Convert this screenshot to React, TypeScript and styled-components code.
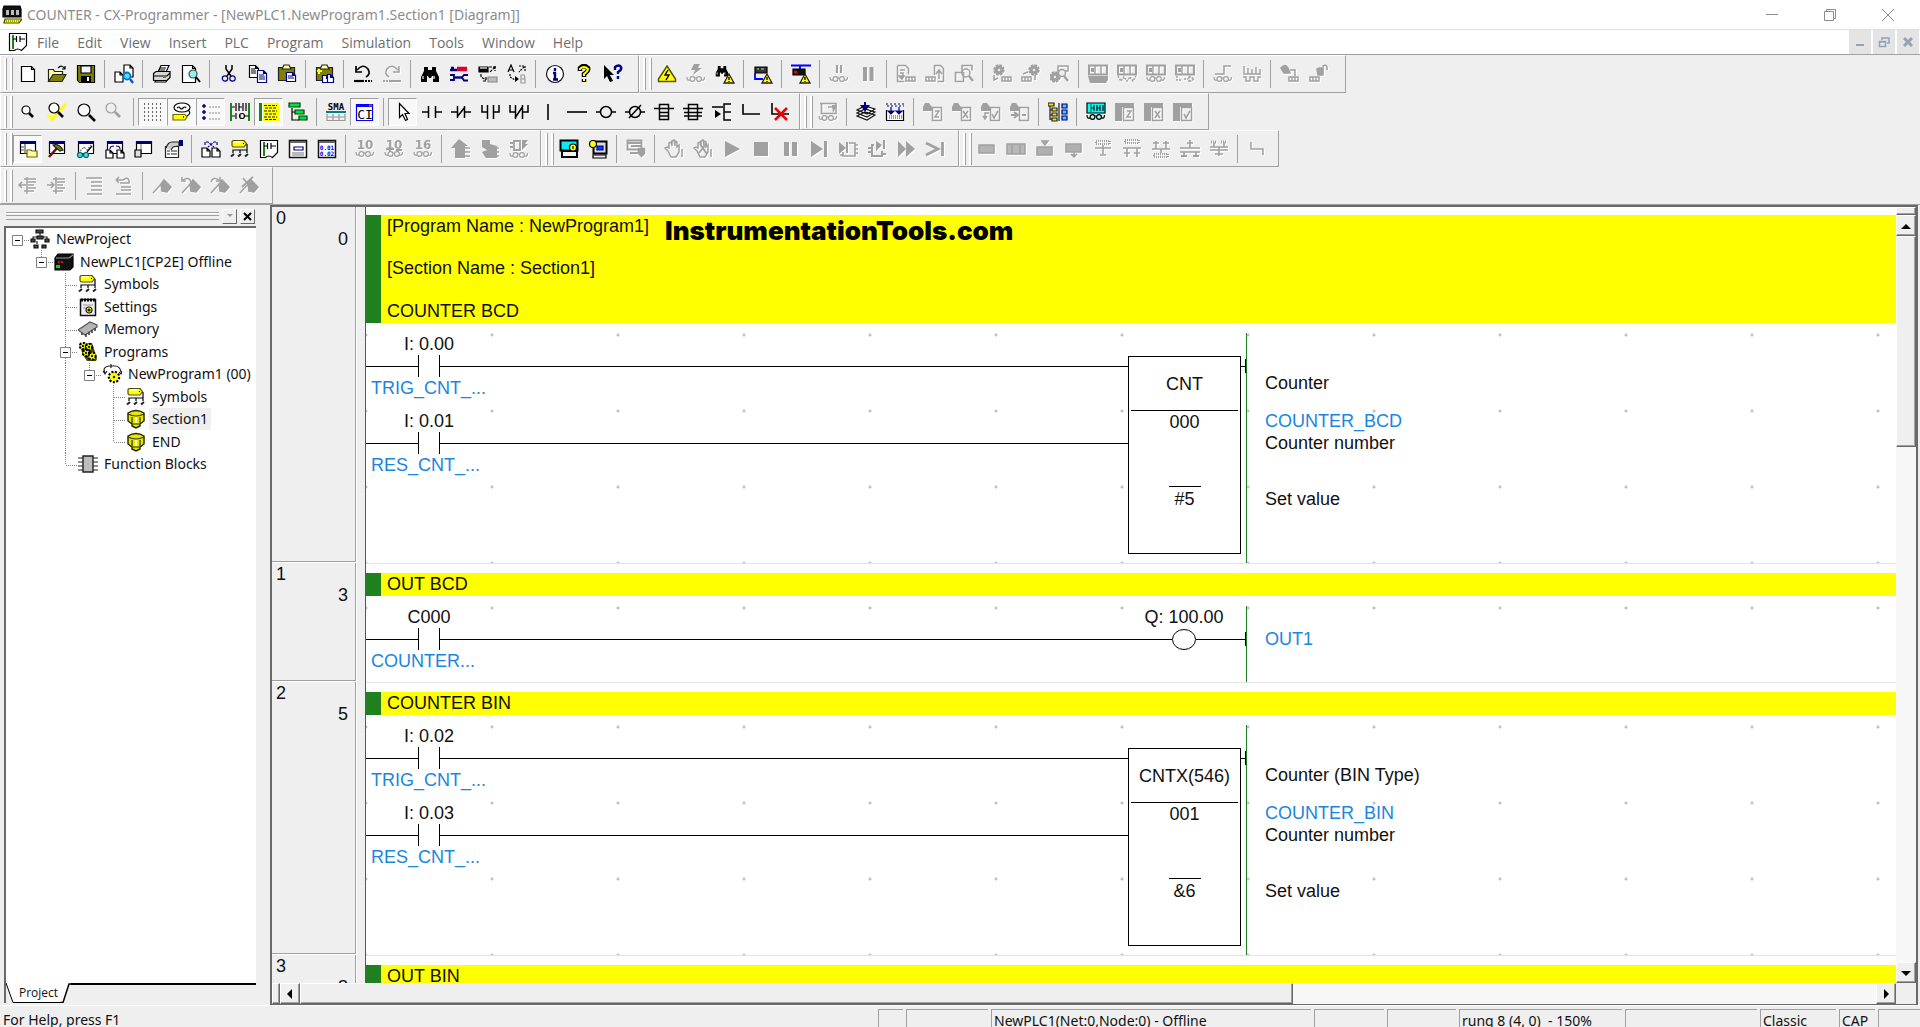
import React from "react";
import styled, { createGlobalStyle, css } from "styled-components";

const UI = '"Noto Sans", "Open Sans", sans-serif';
const MENU = '"Open Sans", "Noto Sans", sans-serif';
const ARIAL = '"Liberation Sans", Arial, sans-serif';
const FACE = "#efefef";
const SHADE = "#a0a0a0";
const DARK = "#696969";
const NAVY = "#000080";
const YEL = "#ffff00";
const BLUE = "#1a86e0";
const GREEN = "#208020";

const Global = createGlobalStyle`
  *, *::before, *::after { box-sizing: border-box; }
  body { margin: 0; background: ${FACE}; font-family: ${UI}; color: #111; overflow: hidden; }
  button { font: inherit; color: inherit; border: 0; padding: 0; margin: 0; background: none; display: flex; align-items: center; justify-content: center; }
  ul { list-style: none; margin: 0; padding: 0; }
  svg { display: block; flex: none; }
`;

/* ---------- icon parts ---------- */

const Specs = ({ y = 15, fill = "none" }: { y?: number; fill?: string }) => (
  <g strokeWidth="1.200">
    <circle cx="6.500" cy={y} r="2.400" fill={fill} />
    <circle cx="13" cy={y} r="2.400" fill={fill} />
    <path d={`M4 ${y + 1}Q1 ${y + 2} 1 ${y - 2}M15.500 ${y + 1}Q18.500 ${y + 2} 18.500 ${y - 2}M8.500 ${y - 1}h2`} />
  </g>
);
const Warn = ({ x = 9, y = 9 }: { x?: number; y?: number }) => (
  <g transform={`translate(${x} ${y})`}>
    <path d="M5 1 10 10H0Z" fill={YEL} stroke="#222" strokeWidth="1.300" />
    <path d="M5 4v3M5 8v1" stroke="#000" strokeWidth="1.300" />
  </g>
);
const Page = ({ x = 0, y = 0, w = 9, h = 11, s = "#000", f = "#fff" }: any) => (
  <path d={`M${x} ${y}h${w - 3}l3 3v${h - 3}h-${w}Z M${x + w - 3} ${y}v3h3`} fill={f} stroke={s} />
);
const Win = ({ children }: { children?: React.ReactNode }) => (
  <g>
    <path d="M2.500 2.500h15v12h-15z" fill="#fff" stroke="#000" />
    <path d="M2 2h16v3H2z" fill={NAVY} stroke="none" />
    {children}
  </g>
);
const Gear = ({ x, y, r = 4, fill = YEL, s = "#000" }: any) => (
  <g>
    <circle cx={x} cy={y} r={r} fill={fill} stroke={s} strokeWidth="2.500" strokeDasharray="2 1.400" />
    <circle cx={x} cy={y} r={r - 1} fill={fill} stroke="none" />
    <circle cx={x} cy={y} r="1.200" fill="#222" stroke="none" />
  </g>
);
const Cog = ({ x, y }: { x: number; y: number }) => (
  <g>
    <circle cx={x} cy={y} r="4.500" fill="currentColor" stroke="currentColor" strokeWidth="2.500" strokeDasharray="2.500 1" />
    <circle cx={x} cy={y} r="1.200" fill={FACE} stroke="none" />
  </g>
);
const Box = ({ x = 1, y = 13 }: { x?: number; y?: number }) => (
  <path d={`M${x} ${y}h9v4h-9zM${x + 3} ${y}v4M${x + 6} ${y}v4`} />
);
const Rack = () => (
  <g>
    <path d="M1 1.500h18v9H1z" strokeWidth="2.200" />
    <path d="M7 2v8M13 2v8" strokeWidth="1.500" />
    <path d="M3 4h3v4H3z" fill="currentColor" stroke="none" />
  </g>
);
const Chip = ({ mark }: { mark: React.ReactNode }) => (
  <g>
    <path d="M0 9V5l2-4h4l3 4v4z" fill="currentColor" stroke="none" />
    <path d="M9.500 5.500h9v13h-9z" />
    {mark}
  </g>
);
const Panel = ({ mark }: { mark: React.ReactNode }) => (
  <g>
    <path d="M0 1h19v4H7v14H0z" fill="currentColor" stroke="none" />
    <path d="M8.500 5.500h10v13h-10z" />
    {mark}
  </g>
);
const MarkList = <path d="M12 9h4l-4 6h4" />;
const MarkX = <path d="m11 9 5 7m0-7-5 7" strokeWidth="1.600" />;
const MarkV = <path d="m11 12 2 4 4-7" strokeWidth="1.600" />;
const Binoc = () => (
  <g>
    <path d="M4 3h4v3h4V3h4v4l3 6v5h-6v-6h-1l-1 2H9l-1-2H7v6H1v-5l3-6z" fill="#000" stroke="none" />
    <path d="M3 12v3M14 12v3" stroke="#fff" />
  </g>
);
const Plain10 = ({ n }: { n: string }) => (
  <text x="10" y="10" textAnchor="middle" fontFamily="DejaVu Sans" fontWeight="700" fontSize="12" fill="currentColor" stroke="none">
    {n}
  </text>
);
const Flag = () => <path d="M1 17 11 6M9 8l3-4 7 7-4 5-5-1z" fill="currentColor" />;
const Flash = () => <path d="M8 0h6l-2 4h4l-9 7 2-5H5z" fill="currentColor" stroke="none" />;
const Comb = ({ y }: { y: number }) => <path d={`M3 ${y}h14v3H3z`} strokeDasharray="1 1" strokeWidth="2" />;
const Hand = () => (
  <path d="M4 12 1 9l2-1 2 1V4l2-1 1 4V2l2-1 1 6V2l2 1v5l2-2v7l-3 5H7z M18 10v8" fill="none" strokeWidth="1.500" />
);
const DipChip = () => (
  <path d="M11 4h6v13H5v-4M17 6h3M17 10h3M17 14h3M2 16h3" strokeWidth="1.600" />
);
const Magnify = ({ x = 8, y = 8, r = 5, s = "#000", f = "#fff" }: any) => (
  <g stroke={s}>
    <path d={`M${x + r - 1} ${y + r - 1}l${r} ${r}`} strokeWidth="2.600" />
    <circle cx={x} cy={y} r={r} fill={f} />
  </g>
);
const Comment = () => (
  <g>
    <ellipse cx="10" cy="5.500" rx="8" ry="4.500" fill="#fff" />
    <path d="M5 6q2-2 3 0t3 0 3 0M16 8q4 3-1 6" />
    <path d="M1 12.500h12l2 2.500-2 3H1z" fill={YEL} stroke="#6b6b00" />
    <path d="M11 15h1" stroke="#000" strokeWidth="1.500" />
  </g>
);
const TagIcon = () => (
  <g>
    <path d="M3 1.500h11l2.500 3L14 8H3L2 6.500v-4z" fill={YEL} stroke="#555500" />
    <path d="M4 3h7" stroke="#fff" />
    <path d="M13 4.500h1M17 5v6H3v3M10 11v3M17 11v3" stroke="#000" />
    <path d="M1 17.500 4 15M8 17.500l3-2.500M15 17.500l3-2.500" stroke="#222" strokeWidth="2" />
  </g>
);
const LadderDoc = () => (
  <g>
    <path d="M1.500 1.500h17v12l-5 5q-4-3-7 0h-5z" fill="#fff" stroke="#000" />
    <path d="M5 3v14" stroke={GREEN} strokeWidth="2" />
    <path d="M5 7h3M8.500 4v6M12 4v6M12 7h5" stroke="#000" />
  </g>
);
const Clip = () => (
  <g>
    <path d="M1.500 3.500h16v13h-16z" fill="#808000" stroke="#222" />
    <path d="M5 5l2-4h5l2 4z" fill="#ffff9c" stroke="#222" />
  </g>
);

const icons: Record<string, React.ReactNode> = {
  new: <Page x={3.5} y={2.5} w={13} h={15} />,
  open: (
    <g>
      <path d="M1.500 17V5.500h5l1 2h8v3" fill="#ffff9c" stroke="#222" />
      <path d="M1.500 17.500 6 10.500h13l-4 7z" fill="#808000" stroke="#222" />
      <path d="M11 4q4-4 7 1m0-3v3h-3" stroke="#000" />
    </g>
  ),
  save: (
    <g>
      <path d="M1.500 1.500h17v17h-15l-2-2z" fill="#808000" stroke="#000" />
      <path d="M5 2h10v7H5z" fill="#f4f4f4" stroke="#000" />
      <path d="M5 12h10v6H5z" fill="#000" stroke="none" />
      <path d="M11 13h2v4h-2z" fill="#fff" stroke="none" />
    </g>
  ),
  compare: (
    <g>
      <Page x={1} y={8} w={8} h={10} />
      <Page x={10} y={1} w={9} h={12} />
      <circle cx="13" cy="12" r="3.500" fill="#3fe8ff" stroke="#0a6fd8" strokeWidth="1.800" />
      <path d="m16 15 3 4" stroke="#0a50d0" strokeWidth="2.400" />
    </g>
  ),
  print: (
    <g>
      <path d="m6 8 3-6.500h8L14 8z" fill="#fff" stroke="#000" />
      <path d="M1.500 9.500 4 7.500h14v6l-3 3H1.500z" fill="#d8d8d8" stroke="#000" />
      <path d="M2 12h13l3-3M4 16l-1 2h11l1-2M8 4h6M7 6h6" stroke="#000" />
      <path d="M11 13h3" stroke="#808000" strokeWidth="2" />
    </g>
  ),
  preview: (
    <g>
      <Page x={1.5} y={1.5} w={13} h={17} />
      <circle cx="12" cy="10" r="4" fill="#8ff2f2" stroke="#444" />
      <path d="m15 13 4 5" stroke="#000" strokeWidth="2" />
    </g>
  ),
  cut: (
    <g>
      <path d="M7 1v4l5 7M13 1v4l-5 7" stroke="#000" strokeWidth="1.500" />
      <circle cx="6" cy="14.500" r="2.700" stroke={NAVY} />
      <circle cx="13.500" cy="14.500" r="2.700" stroke={NAVY} />
    </g>
  ),
  copy: (
    <g>
      <Page x={1.5} y={1.5} w={9} h={12} />
      <path d="M3 5h4M3 7h5M3 9h5" stroke="#000" />
      <Page x={9.5} y={6.5} w={9} h={12} s={NAVY} />
      <path d="M11 11h5M11 13h6M11 15h6" stroke={NAVY} />
    </g>
  ),
  paste: (
    <g>
      <Clip />
      <Page x={9.5} y={8.5} w={9} h={9} s={NAVY} />
      <path d="M11 12h5M11 14h6" stroke={NAVY} />
    </g>
  ),
  pasteSpecial: (
    <g>
      <Clip />
      <path d="M2 7h5M4 5v5" stroke={YEL} strokeWidth="2" />
      <Page x={7.5} y={11.5} w={7} h={7} s={NAVY} />
      <Page x={12.5} y={10.5} w={6} h={8} s={NAVY} />
    </g>
  ),
  undo: (
    <g>
      <path d="M4 6q6-7 11-1 3 5-2 8M3 2v6h6" strokeWidth="1.700" />
      <path d="M1 17h10" strokeWidth="2.200" />
      <path d="M12 17h7" strokeDasharray="2 1" strokeWidth="2.200" />
    </g>
  ),
  redo: (
    <g>
      <path d="M16 6Q10-1 5 5q-3 5 2 8M17 2v6h-6" strokeWidth="1.500" />
      <path d="M1 17h8" strokeDasharray="2 1" strokeWidth="2" />
      <path d="M9 17h10" strokeWidth="2" />
    </g>
  ),
  find: <Binoc />,
  tools: (
    <g>
      <path d="M1 6h7M2 4h3" stroke={NAVY} strokeWidth="2.400" />
      <path d="M8 5h10" stroke="#e00030" strokeWidth="4.500" />
      <path d="M4 13.500h10" stroke={NAVY} strokeWidth="2.400" />
      <path d="M1 11h4v5H1M19 11h-4l-2 2.500 2 3h4" stroke={NAVY} strokeWidth="1.800" />
    </g>
  ),
  swap: (
    <g>
      <path d="M1 3h9v5H1z" fill="#000" stroke="#000" />
      <path d="M2 4h7" stroke="#fff" />
      <path d="M11 3h7M17 2v5M17 3l-5 5M3 10v3l5 3M8 13v4H4" strokeDasharray="3 1" stroke="#000" />
      <path d="M10 13h9v5h-9z" fill="#bbb" stroke="#888" />
    </g>
  ),
  ab: (
    <g>
      <path d="M1 8 4 1l3 7M2 6h4" stroke="#000" />
      <path d="M12 2h6v5M17 3l-5 5M3 10v3l5 3" strokeDasharray="2 1" stroke="#000" />
      <path d="M8 12l4 3-4 3z" fill="#000" stroke="none" />
      <path d="M14 11h3l1 2-1 2h-3zM14 15h4v4h-4z" stroke="#999" />
    </g>
  ),
  info: (
    <g>
      <circle cx="10" cy="10" r="8.500" fill="#fff" stroke="#111" />
      <path d="M10 4v3M8 9h2v6M8 15.500h5" stroke={NAVY} strokeWidth="2.400" />
    </g>
  ),
  help: (
    <g>
      <path d="M6 7V4q4-4 8 0 1 3-4 6v3M10 15v3" stroke="#000" strokeWidth="4.500" />
      <path d="M6 6V5q4-4 8 0 0 2-4 5v2M10 15v2" stroke={YEL} strokeWidth="2" />
    </g>
  ),
  whats: (
    <g>
      <path d="M1 1v14l3-3 3 6 3-1-3-6h4z" fill="#000" stroke="none" />
      <path d="M12 6V3q4-3 6 0 1 3-3 5v2M15 12v3" stroke={NAVY} strokeWidth="2.400" />
    </g>
  ),
  warn: (
    <g>
      <path d="M10 2 18.500 15v2.500h-17V15z" fill={YEL} stroke="#555500" strokeWidth="1.500" />
      <path d="m11 6-3 5h4l-3 5" stroke="#000" strokeWidth="1.400" />
    </g>
  ),
  flashSpecs: (
    <g>
      <Flash />
      <Specs />
    </g>
  ),
  findWarn: (
    <g>
      <g transform="scale(.7)">
        <Binoc />
      </g>
      <Warn />
    </g>
  ),
  plcWarn: (
    <g>
      <path d="M2 3h12v6H2z" fill="#333" stroke="#000" />
      <path d="M4 5h2M8 5h3" stroke="#ccc" />
      <path d="M2 9v6h8" stroke="#0000ff" strokeWidth="1.800" />
      <Warn />
    </g>
  ),
  netWarn: (
    <g>
      <path d="M0 1.500h20M9 1v4" stroke="#0000ff" strokeWidth="1.800" />
      <path d="M2 5h12v6H2z" fill="#111" stroke="#000" />
      <path d="M3 8h3" stroke="#f00" strokeWidth="2" />
      <Warn />
    </g>
  ),
  pauseSpecs: (
    <g>
      <path d="M8 1v8M12 1v8" strokeWidth="2" />
      <Specs />
    </g>
  ),
  pause: <path d="M7 3v14M13.500 3v14" strokeWidth="4" />,
  docDown: (
    <g>
      <path d="M1.500 1.500h8l3 3v6M1.500 1.500v16h7M4 6h5M4 9h3v4" />
      <path d="M3 12h5l-2 3z" fill="currentColor" />
      <Box x={10} y={13} />
    </g>
  ),
  docUp: (
    <g>
      <path d="M9.500 11V1.500h6l3 3v13h-6M14 15V7m-3 3 3-4 3 4" />
      <Box x={1} y={13} />
    </g>
  ),
  docFind: (
    <g>
      <path d="M1.500 8.500h8v9h-8zM8 8V1.500h10v5" strokeWidth="1.600" />
      <circle cx="12" cy="9" r="4" />
      <path d="m15 12 4 5" strokeWidth="2.400" />
    </g>
  ),
  gearDown: (
    <g>
      <Cog x={7} y={6} />
      <path d="M2 11v5l4-2" />
      <Box x={10} y={13} />
    </g>
  ),
  gearUp: (
    <g>
      <Cog x={13} y={6} />
      <path d="M14 11v5M2 10l5-2" />
      <Box x={1} y={13} />
    </g>
  ),
  gearFind: (
    <g>
      <Cog x={5} y={13} />
      <path d="M8 2h10v5H8z" />
      <circle cx="12" cy="9" r="3.500" fill={FACE} />
      <path d="m14 12 4 5" strokeWidth="2.400" />
    </g>
  ),
  rack1: (
    <g>
      <Rack />
      <path d="M0 12h20v4l-2 3H2z" fill="currentColor" stroke="none" />
    </g>
  ),
  rack2: (
    <g>
      <Rack />
      <path d="m1 12 3 5 3-4 3 4 3-4 3 4 3-5" strokeDasharray="2 1" />
    </g>
  ),
  rack3: (
    <g>
      <Rack />
      <Specs y={15} />
    </g>
  ),
  rack4: (
    <g>
      <Rack />
      <path d="M2 12v4h4M9 15h4M14 12l5 3-5 3z" strokeDasharray="2 1" />
    </g>
  ),
  pulse: (
    <g>
      <path d="M2 10h9V2h7" />
      <Specs y={15} />
    </g>
  ),
  trace: <path d="M2 2v8h17M6 4v6M10 5v5M14 3v7M18 5v5M1 13h3v4h4v-4h4v4h4v-4h3" strokeWidth="1.400" />,
  lock: (
    <g>
      <path d="M1 4q4-5 7 0l2 5H4z" fill="currentColor" />
      <path d="M10 6h5v6" />
      <Box x={9} y={13} />
    </g>
  ),
  unlock: (
    <g>
      <path d="M8 5q3-2 6 0v6H9z" fill="currentColor" />
      <path d="M14 6V2q3-2 4 1v3" />
      <Box x={1} y={13} />
    </g>
  ),
  zoomS: <Magnify x={8} y={8} r={4} />,
  zoomFit: (
    <g>
      <path d="M1 13l4 4L19 2" stroke={YEL} strokeWidth="3" />
      <Magnify x={7} y={6} r={5} />
    </g>
  ),
  zoomL: <Magnify x={8} y={8} r={6} f="#f7f7f7" />,
  zoomG: <Magnify x={6} y={6} r={5} s="#a0a0a0" f={FACE} />,
  grid: (
    <g strokeDasharray="1 3" strokeWidth="1.300" stroke="#333">
      <path d="M1 2h18M1 6h18M1 10h18M1 14h18M1 18h18" />
    </g>
  ),
  comment: <Comment />,
  list: (
    <g>
      <path d="M1 4h4M3 2v4M1 10h4M3 8v4M1 16h4M3 14v4" stroke={NAVY} strokeWidth="1.500" />
      <path d="M8 5h11M8 11h11M8 17h11" stroke="#888" strokeDasharray="2 1" />
    </g>
  ),
  ladder: (
    <g>
      <path d="M1 1v18M19 1v18" stroke={GREEN} strokeWidth="2" />
      <path d="M2 5h3M6 1v8M9 1v8M9 5h3M13 1v8M16 1v8M2 14h3M6 11v6M9 14h2M14.500 14h4" />
      <circle cx="12" cy="14" r="2.500" />
    </g>
  ),
  rungs: (
    <g>
      <path d="M0 1h3v18H0z" fill={GREEN} stroke="none" />
      <path d="M4 1h16v18H4z" fill={YEL} stroke="none" />
      <path d="M5 3.500h13M6 6h11M5 9h13M6 12h11M5 15h13M6 17.500h11" stroke="#222" strokeDasharray="3 1" />
    </g>
  ),
  tree: (
    <g>
      <path d="M4 6v12h7M4 10h4" />
      <path d="M1 1h11v4H1zM7 8h9v4H7zM11 14h8v4h-8z" fill="#00e040" stroke="#003c00" />
    </g>
  ),
  sma: (
    <g>
      <text x="10" y="8" textAnchor="middle" fontFamily="DejaVu Sans Mono" fontWeight="700" fontSize="9" fill="#000" stroke="none">
        SMA
      </text>
      <path d="M0 10h20" stroke="#008080" strokeWidth="2" />
      <path d="M1 12v7M7 12v7M13 12v7M19 12v7M1 15h18M1 18.500h18" stroke="#999" />
    </g>
  ),
  ci: (
    <g>
      <path d="M1.500 2.500h16v16h-16z" fill="#fff" stroke="#0000ff" />
      <path d="M1 2h17v3H1z" fill="#0000ff" stroke="none" />
      <path d="M14 3.500h3" stroke="#f33" strokeWidth="2" />
      <text x="10" y="17" textAnchor="middle" fontFamily="DejaVu Sans Mono" fontSize="13" fill="#000" stroke="none">
        CI
      </text>
    </g>
  ),
  pointer: <path d="M6.500 1.500v14l3-3 3 6 2-1-2.500-6h4z" fill="#fff" stroke="#000" />,
  no: <path d="M0 10h6M6.500 4v12M13.500 4v12M14 10h6" strokeWidth="1.500" />,
  nc: <path d="M0 10h6M6.500 4v12M13.500 4v12M14 10h6M6 15l8-10" strokeWidth="1.500" />,
  orNo: <path d="M2 3v7h5M7.500 3v14M13.500 3v14M14 10h5V3" strokeWidth="1.500" />,
  orNc: <path d="M1 3v7h5M6.500 3v14M13.500 3v14M14 10h5V3M6 16l8-12" strokeWidth="1.500" />,
  vline: <path d="M10 2v16" strokeWidth="1.600" />,
  hline: <path d="M0 10h20" strokeWidth="1.600" />,
  coil: (
    <g strokeWidth="1.500">
      <path d="M0 10h4M16 10h4" />
      <circle cx="10" cy="10" r="5.500" />
    </g>
  ),
  coilNc: (
    <g strokeWidth="1.500">
      <path d="M0 10h4M16 10h4M4 16 16 3" />
      <circle cx="10" cy="10" r="5.500" />
    </g>
  ),
  instr: <path d="M5.500 2.500h9v15h-9zM0 6.500h20M5 10.500h10M5 14h10" strokeWidth="1.500" />,
  instr2: <path d="M5.500 2.500h9v15h-9zM0 6.500h20M1 10.500h18M1 14h18" strokeWidth="1.500" />,
  fb: (
    <g strokeWidth="1.500">
      <path d="M0 5h11M19 2h-7v16h7M12 10h7" />
      <path d="m3 8 6 4-6 4z" fill="#000" stroke="none" />
    </g>
  ),
  elbow: <path d="M2 2v10h17" strokeWidth="1.600" />,
  elbowX: (
    <g>
      <path d="M2 1v11h17" strokeWidth="1.600" />
      <path d="m5 6 12 12M17 6 5 18" stroke="#f00000" strokeWidth="2.600" />
    </g>
  ),
  winSpecs: (
    <g>
      <path d="M2 1.500h16v10H3.500V1M10 5h8v5" strokeWidth="1.600" />
      <path d="M14 3h5l-4 8z" fill="currentColor" stroke="none" />
      <Specs y={16} />
    </g>
  ),
  stack: (
    <g>
      <path d="m1 14 8-4 10 3-8 5zM1 11l8-4 10 3-8 5zM1 8l8-4 10 3-8 5z" fill="#fff" stroke="#111" />
      <path d="M9 0v7M6 4l3 4 3-4z" stroke={NAVY} fill={NAVY} strokeWidth="2" />
    </g>
  ),
  compile: (
    <g>
      <path d="M1.500 8v10.500h17V8" fill="#fff" stroke="#000" />
      <path d="M1 2h18M2 4h17" stroke={NAVY} strokeDasharray="2 2" />
      <path d="M6 5v5M14 5v5M3 9l3 3 3-3zM11 9l3 3 3-3z" stroke={NAVY} fill={NAVY} />
      <path d="M4 14h13M4 16h13" stroke="#333" strokeDasharray="1 1" />
    </g>
  ),
  chip1: <Chip mark={MarkList} />,
  chip2: <Chip mark={MarkX} />,
  chip3: <Chip mark={<g>{MarkV}<path d="M8 11H4v6M2 14l2 3 2-3" /></g>} />,
  chip4: <Chip mark={<path d="M1 13h6M4 10l4 3-4 3M12 13h4" strokeWidth="2" />} />,
  trees: (
    <g>
      <path d="M2 3v15M2 8h3M2 13h3M2 17h3M11 1v18" stroke="#222" />
      <path d="M0 1h6v3H0zM4 6h5v3H4zM4 11h5v3H4zM4 16h5v3H4z" fill="#e8e800" stroke="#222" />
      <path d="M14 2h5v4h-5zM14 8h5v4h-5zM14 14h5v4h-5z" fill="#40c8ff" stroke={NAVY} />
    </g>
  ),
  cyan: (
    <g>
      <path d="M1 1h18v10H1z" fill="#00ffff" stroke="#000" />
      <path d="M5 1v10" stroke={GREEN} />
      <path d="M5 6h3M8 3v6M11 3v6M11 6h3M14 3v6M17 3v6" />
      <Specs y={15} fill="#9ff" />
    </g>
  ),
  panel1: <Panel mark={MarkList} />,
  panel2: <Panel mark={MarkX} />,
  panel3: <Panel mark={MarkV} />,
  winTree: (
    <Win>
      <path d="M7 5v10M3 8h3M3 11h3" stroke="#555" />
      <path d="M9 18v-7h4l1 1h5v6z" fill="#ffff9c" stroke="#666600" />
    </Win>
  ),
  winHammer: (
    <Win>
      <path d="m2 18 9-10" stroke="#6b1010" strokeWidth="2.600" />
      <path d="M6 6q6-2 10 5l-3 1-5-4z" fill="#808000" stroke="#222" />
    </Win>
  ),
  winWatch: (
    <Win>
      <path d="m4 12 4-4 3 3 4-5" stroke="#777" strokeDasharray="2 1" />
      <circle cx="4" cy="16" r="2.500" fill="#40e0e0" stroke="#066" />
      <circle cx="10" cy="16" r="2.500" fill="#40e0e0" stroke="#066" />
      <path d="m11 13 5-6" />
    </Win>
  ),
  winXref: (
    <Win>
      <path d="M5 10q0-3 4-3M15 10q0-3-4-3" stroke={NAVY} />
      <Page x={1} y={11} w={7} h={8} />
      <Page x={12} y={11} w={7} h={8} />
    </Win>
  ),
  winIo: (
    <Win>
      <path d="M7 5v9" stroke="#888" />
      <path d="M1 11h6v7H1z" fill="#ddd" stroke="#000" />
    </Win>
  ),
  props: (
    <g>
      <path d="M2.500 7.500h13v11h-13z" fill="#fff" stroke="#222" />
      <path d="M4 12h3M8 12h6M4 15h3M8 15h6" stroke="#222" />
      <path d="M3 9q2-6 6-6h7v4l-6 1-2 3" fill="#ccc" stroke="#222" />
      <path d="M16 1h4v6h-4z" fill={NAVY} stroke="none" />
    </g>
  ),
  xdocs: (
    <g>
      <Page x={1} y={9} w={8} h={9} />
      <Page x={11} y={9} w={8} h={9} />
      <path d="M4 6V3h3l6 5M16 6V3h-3L7 8" stroke={NAVY} strokeDasharray="3 1" />
    </g>
  ),
  tag: <TagIcon />,
  ladderDoc: <LadderDoc />,
  form: (
    <g>
      <path d="M1.500 1.500h17v17h-17z" fill="#fff" stroke="#111" strokeWidth="1.500" />
      <path d="M2 3h16" stroke="#666" strokeWidth="2" />
      <path d="M6 8h9v3H6z" fill="#fff" stroke={NAVY} />
      <path d="M4 14h12M4 16h12" stroke="#777" />
    </g>
  ),
  digits: (
    <g>
      <path d="M1.500 1.500h17v17h-17z" fill="#fff" stroke="#111" strokeWidth="1.500" />
      <path d="M2 3h16" stroke="#666" strokeWidth="2" />
      <text x="10" y="11" textAnchor="middle" fontFamily="DejaVu Sans Mono" fontWeight="700" fontSize="6" fill="#0000ff" stroke="none">
        0.01
      </text>
      <text x="10" y="17" textAnchor="middle" fontFamily="DejaVu Sans Mono" fontWeight="700" fontSize="6" fill="#0000ff" stroke="none">
        0.02
      </text>
    </g>
  ),
  dec: (
    <g>
      <Plain10 n="10" />
      <Specs y={15} />
    </g>
  ),
  sdec: (
    <g>
      <Plain10 n="10" />
      <path d="M2 10h8M6 7v6M12 11h6" strokeWidth="2" />
      <Specs y={15} />
    </g>
  ),
  hex: (
    <g>
      <Plain10 n="16" />
      <Specs y={15} />
    </g>
  ),
  up: (
    <g>
      <path d="M8 0 17 7h-3v12H4V9H0z" fill="currentColor" stroke="none" />
      <path d="M14 9h5M14 13h5M14 17h5" strokeWidth="1.500" />
    </g>
  ),
  down: (
    <g>
      <path d="M2 1h8v4l7 2v12H6l-4-6 5-2-5-3z" fill="currentColor" stroke="none" />
      <path d="M14 9h5M14 13h5M14 17h5" strokeWidth="1.500" />
    </g>
  ),
  chipSpecs: (
    <g>
      <path d="M5 2h6v9H5zM1 4h3M1 8h3" strokeWidth="1.800" />
      <path d="M13 1h6l-3 4h3l-6 6V6z" fill="currentColor" stroke="none" />
      <Specs y={16} />
    </g>
  ),
  simPlc: (
    <g>
      <path d="M1.500 1.500h17v10h-17z" fill="#00f0ff" stroke="#000" strokeWidth="2" />
      <path d="M3 12h15v6H3z" fill="#f2f2f2" stroke="#000" strokeWidth="2" />
      <circle cx="14" cy="8.500" r="3.500" fill={YEL} stroke="#000" />
      <path d="M14 7v3" />
    </g>
  ),
  simPc: (
    <g>
      <path d="M5.500 2.500h13v12h-13z" fill="#ddd" stroke="#000" strokeWidth="2" />
      <path d="M9 7h6v4H9z" fill="#0040ff" stroke={NAVY} />
      <path d="M5 16h13v3H5z" fill="#eee" stroke="#000" />
      <circle cx="5" cy="5" r="3.500" fill={YEL} stroke="#000" />
    </g>
  ),
  netCfg: (
    <g>
      <path d="M1.500 1.500h14v9h-14zM2 4h13M5 7h10M4 14h8" strokeWidth="1.800" />
      <path d="M12.500 9.500h6v5l-3 3-3-3z" fill="currentColor" />
    </g>
  ),
  hand: <Hand />,
  handX: (
    <g>
      <Hand />
      <path d="M6 14 14 4M7 5l7 10" strokeWidth="2" />
    </g>
  ),
  play: <path d="M3 2v16l15-8z" fill="currentColor" stroke="none" />,
  stop: <path d="M3 3h14v14H3z" fill="currentColor" stroke="none" />,
  pause2: <path d="M4 3h5v14H4zM12 3h5v14h-5z" fill="currentColor" stroke="none" />,
  step: <path d="M2 2l12 8-12 8zM15 2h3v16h-3z" fill="currentColor" stroke="none" />,
  stepIn: (
    <g>
      <path d="m1 3 7 6-7 6zM8 3h2v11H8z" fill="currentColor" stroke="none" />
      <DipChip />
    </g>
  ),
  stepOut: (
    <g>
      <path d="m9 2 6 4-6 6zM16 1h2v9h-2z" fill="currentColor" stroke="none" />
      <path d="M7 6H5v11h10v-5M1 9h3M1 13h3M16 15h3" strokeWidth="2" />
    </g>
  ),
  ff: <path d="m2 2 8 8-8 8zM10 2l9 8-9 8z" fill="currentColor" stroke="none" />,
  last: <path d="m1 4 12 6-12 6M17.500 3v14" strokeWidth="2.800" />,
  b1: <path d="M2 6h15v8H2z" fill="#b4b4b4" />,
  b2: <path d="M1 5h18v10H1zM6 5v10M14 5v10" fill="#b8b8b8" strokeWidth="1.500" />,
  b3: <path d="M2 8h15v8H2zM7 2h6l-3 4z" fill="#b0b0b0" />,
  b4: <path d="M2 5h15v8H2zM10 13v5M7 15l3 3 3-3" fill="#b0b0b0" />,
  c1: <g><Comb y={2} /><path d="M10 6v9M2 9h16M7 16h6" strokeWidth="1.600" /></g>,
  c2: <g><Comb y={1} /><path d="M1 9h18M5 9v9M15 9v9M2 14h6M12 14h6" strokeWidth="1.600" /></g>,
  c3: <g><Comb y={15} /><path d="M1 10h18M5 2v8M15 2v8M2 4h6M12 4h6M10 10v4" strokeWidth="1.600" /></g>,
  c4: <g><path d="M0 9h20M10 1v8M7 4h6M0 13h20M4 13v5M16 13v5" strokeWidth="1.600" /><path d="M1 17h6M13 17h6" strokeWidth="2" /></g>,
  c5: <g><path d="M2 3h6M12 3h6" strokeWidth="3" strokeDasharray="1 1" /><path d="M1 8h18M5 3v5M15 3v5M10 8v9M6 15h8M1 11h18" strokeWidth="1.600" /></g>,
  zig: <path d="M4 3v7h12v6" strokeWidth="1.500" />,
  outdent: <path d="M1 9h7M4 6 1 9l3 3M6 3h12M10 6h8M10 9h6M10 12h8M6 15h10M9 1v17" strokeWidth="1.500" />,
  indent: <path d="M0 9h7M4 6l3 3-3 3M6 3h12M10 6h8M10 9h6M10 12h8M6 15h10M9 1v17" strokeWidth="1.500" />,
  lines: <path d="M1 2h16M6 6h11M6 10h11M6 14h11M2 18h15" strokeWidth="1.400" />,
  linesBack: <path d="M3 4h6q5-4 6 1v2H6M2 4l3-3M2 4l3 3M7 11h10M7 14h10M2 18h15" strokeWidth="1.500" />,
  flag: <Flag />,
  flagPrev: <g><Flag /><path d="M1 1v4h4M2 4q6-4 8 2" /></g>,
  flagNext: <g><Flag /><path d="M10 1v4H6M9 4Q3 0 1 6" /></g>,
  flagX: <g><Flag /><path d="m4 2 10 12M14 1 3 11" strokeWidth="1.800" /></g>,
  app: (
    <g>
      <path d="M2 1h16l1 3v8H1V4z" fill="#111" stroke="#000" />
      <path d="M4 5h3v5H4zM9 5h3v5H9zM14 5h3v5h-3z" fill="#bbb" stroke="none" />
      <path d="m3 14-1 4h15l3-4z" fill={YEL} stroke="#444400" />
      <path d="M4 16h13" stroke="#555500" strokeDasharray="1 1" />
    </g>
  ),
  project: (
    <g>
      <path d="M10 3v7M3 11V8h14v3M7 12v3" stroke="#222" />
      <path d="M6 1h7v3H6zM7 7h6v3H7zM1 10h4v3H1zM15 10h4v3h-4zM4 16h4v3H4zM12 16h4v3h-4z" fill="#444" stroke="#111" />
    </g>
  ),
  plc: (
    <g>
      <path d="M1 6 4 2h15v13l-3 3H1z" fill="#111" stroke="#000" />
      <path d="M2 6h13l4-3" stroke="#999" />
      <path d="M4 10h2M7 10h2" stroke="#f00000" strokeWidth="2" />
      <path d="M2 13h4v3H2z" fill="#00e000" stroke="none" />
    </g>
  ),
  settings: (
    <g>
      <path d="M2.500 2.500h15v16h-15z" fill="#eee" stroke="#111" strokeWidth="1.500" />
      <path d="M3 3h15" stroke="#000" strokeWidth="3" strokeDasharray="2 1" />
      <path d="M5 8h10M5 11h4" stroke="#999" />
      <circle cx="11" cy="13" r="3" fill={YEL} stroke="#222" />
      <circle cx="11" cy="13" r="1" fill="#000" />
    </g>
  ),
  memory: (
    <g>
      <path d="m0 11 12-8 7 3v2L7 16z" fill="#b5b5b5" stroke="#555" />
      <path d="M8 15v3M11 13v3M14 11v3M17 9v3M4 14v2" stroke="#333" strokeWidth="1.500" />
    </g>
  ),
  programs: (
    <g>
      <path d="M1 2 14 1l2 6 3 10-1 2H9l-4-6z" fill="#4a4a00" stroke="none" />
      <Gear x={5} y={4} r={3} />
      <Gear x={11} y={5} r={3} />
      <Gear x={14} y={14} r={3.5} />
      <Gear x={8} y={11} r={3} />
    </g>
  ),
  program: (
    <g>
      <path d="M3 9Q0 3 7 2h6q5 0 6 6M9 0v4M1 7l2 3 2-3M17 8l2 2 1-3" stroke="#222" />
      <Gear x={12} y={13} r={5} />
    </g>
  ),
  section: (
    <g>
      <path d="M2 4q8-5 16 0v8l-4 3v2l-4 2-4-2v-2l-4-3z" fill="#e6e600" stroke="#222200" strokeWidth="1.400" />
      <path d="M2 5q8 4 16 0M6 8v6M14 8v6M6 15h8" stroke="#333300" />
      <path d="M10 8v6" stroke="#ffffa0" strokeWidth="2" />
    </g>
  ),
  fblocks: (
    <g>
      <path d="M0 4h5M0 8h5M0 12h5M0 16h5M15 4h5M15 8h5M15 12h5M15 16h5" stroke="#222" />
      <path d="M5 2h10v16H5z" fill="#bdbdbd" stroke="#222" strokeWidth="1.400" />
    </g>
  ),
};

const Icon = ({ name }: { name: string }) => (
  <svg width="20" height="20" viewBox="0 0 20 20" fill="none" stroke="currentColor" strokeWidth="1.200" aria-hidden="true">
    {icons[name]}
  </svg>
);

/* ---------- window frame ---------- */

const Shell = styled.div`
  height: 100vh;
  display: flex;
  flex-direction: column;
  overflow: hidden;
`;
const TitleBar = styled.header`
  display: flex;
  align-items: center;
  height: 29px;
  padding: 0 3px 0 2px;
  background: #fff;
  color: #8c8c8c;
`;
const Title = styled.h1`
  flex: 1;
  margin: 0 0 0 5px;
  font-size: 14px;
  font-weight: 400;
  line-height: 29px;
`;
const CaptionButton = styled.button`
  width: 58px;
  height: 28px;
`;
const MenuBar = styled.nav`
  display: flex;
  align-items: center;
  height: 25px;
  padding: 0 1px 0 8px;
  background: #fff;
  border-top: 1px solid #e0e0e0;
  color: #6e6e6e;
`;
const MenuList = styled.ul`
  display: flex;
  flex: 1;
  gap: 18px;
  padding-left: 9px !important;
`;
const MenuItem = styled.button`
  font-family: ${MENU};
  font-size: 14px;
  line-height: 23px;
`;
const MdiButtons = styled.div`
  display: flex;
  gap: 2px;
`;
const MdiButton = styled.button`
  width: 22px;
  height: 24px;
  background: #e4e4e4;
  color: #93a3b3;
`;

/* ---------- toolbars ---------- */

const Dock = styled.div`
  display: grid;
  grid-template-rows: 38px 37px 37px 37px;
  border-top: 1px solid ${SHADE};
  border-bottom: 1px solid ${SHADE};
`;
const DockRow = styled.div`
  display: flex;
`;
const Bar = styled.div<{ $w: number }>`
  display: flex;
  align-items: center;
  width: ${(p) => p.$w}px;
  padding-left: 3px;
  border: 1px solid;
  border-color: #fff ${SHADE} ${SHADE} #fff;
`;
const Grip = styled.span`
  width: 9px;
  height: 32px;
  background: linear-gradient(
    to right,
    #fff 2px,
    ${SHADE} 2px 3px,
    transparent 3px 6px,
    #fff 6px 8px,
    ${SHADE} 8px
  );
`;
const Divider = styled.span`
  width: 1px;
  height: 28px;
  margin: 0 4px;
  background: ${SHADE};
`;
const Tool = styled.button<{ $on: boolean }>`
  flex: none;
  width: 29px;
  height: 28px;
  color: #000;
  &:disabled {
    color: #a0a0a0;
    filter: drop-shadow(1px 1px 0 #fff);
  }
  &:disabled svg {
    stroke-width: 1.500;
  }
  ${(p) =>
    p.$on &&
    css`
      background: #f8f8f8;
      border: 1px solid;
      border-color: ${SHADE} #fff #fff ${SHADE};
    `}
`;

type BarSpec = { label: string; w: number; groups: string[] };

/* A leading "-" marks a disabled tool, a leading "*" one that is switched on. */
const docks: BarSpec[][] = [
  [
    {
      label: "Standard",
      w: 639,
      groups: ["new open save", "compare", "print preview", "cut copy paste", "pasteSpecial", "undo -redo", "find tools swap ab", "info help whats"],
    },
    {
      label: "PLC",
      w: 707,
      groups: [
        "warn -flashSpecs findWarn", "plcWarn", "netWarn", "-pauseSpecs -pause", "-docDown -docUp -docFind",
        "-gearDown -gearUp -gearFind", "-rack1 -rack2 -rack3 -rack4", "-pulse -trace", "-lock -unlock",
      ],
    },
  ],
  [
    {
      label: "Diagram",
      w: 800,
      groups: [
        "zoomS zoomFit zoomL zoomG", "*grid *comment *list ladder *rungs tree", "sma *ci",
        "*pointer no nc orNo orNc vline hline coil coilNc instr instr2 fb elbow elbowX",
      ],
    },
    {
      label: "Program check",
      w: 409,
      groups: ["-winSpecs", "stack compile", "-chip1 -chip2 -chip3 -chip4", "trees", "cyan -panel1 -panel2 -panel3"],
    },
  ],
  [
    {
      label: "Views",
      w: 541,
      groups: ["*winTree winHammer winWatch winXref winIo props", "xdocs tag ladderDoc form digits", "-dec -sdec -hex", "-up -down -chipSpecs"],
    },
    {
      label: "Simulator debug",
      w: 418,
      groups: ["simPlc simPc", "-netCfg", "-hand -handX -play -stop -pause2 -step -stepIn -stepOut -ff -last"],
    },
    { label: "Function block", w: 320, groups: ["-b1 -b2 -b3 -b4 -c1 -c2 -c3 -c4 -c5", "-zig"] },
  ],
  [{ label: "Bookmarks", w: 273, groups: ["-outdent -indent", "-lines -linesBack", "-flag -flagPrev -flagNext -flagX"] }],
];

const ToolBar = ({ label, w, groups }: BarSpec) => (
  <Bar $w={w} role="toolbar" aria-label={label}>
    <Grip />
    {groups.map((g, i) => (
      <React.Fragment key={g}>
        {i > 0 && <Divider />}
        {g.split(" ").map((t) => {
          const name = t.replace(/^[-*]/, "");
          return (
            <Tool key={t} $on={t[0] === "*"} disabled={t[0] === "-"} aria-label={name}>
              <Icon name={name} />
            </Tool>
          );
        })}
      </React.Fragment>
    ))}
  </Bar>
);

/* ---------- project tree ---------- */

const Work = styled.main`
  display: flex;
  flex: 1;
  min-height: 0;
`;
const Side = styled.aside`
  display: flex;
  flex-direction: column;
  width: 270px;
  padding: 1px 0 2px 4px;
`;
const SideHead = styled.div`
  display: flex;
  align-items: center;
  gap: 3px;
  height: 20px;
  padding: 0 15px 0 2px;
`;
const SideGrip = styled.span`
  flex: 1;
  height: 8px;
  border: 1px solid ${SHADE};
  border-width: 1px 0;
  box-shadow: inset 0 1px 0 #fff, inset 0 -3px 0 ${FACE}, inset 0 -4px 0 ${SHADE};
`;
const SmallButton = styled.button`
  width: 15px;
  height: 15px;
  border: 1px solid;
  border-color: #fff ${DARK} ${DARK} #fff;
`;
const TreeBox = styled.ul`
  flex: 1;
  margin: 0 14px 0 0 !important;
  background: #fff;
  border-left: 2px solid ${DARK};
  border-top: 2px solid ${DARK};
`;
const TreeRow = styled.li`
  display: flex;
  align-items: center;
  height: 22px;
  &:nth-child(even) {
    height: 23px;
  }
`;
const TreeLabel = styled.span<{ $sel: boolean }>`
  margin-left: 3px;
  padding: 0 3px;
  font-size: 14px;
  line-height: 22px;
  white-space: nowrap;
  background: ${(p) => (p.$sel ? FACE : "none")};
`;
const Joint = ({ kind, box }: { kind: string; box: boolean }) => (
  <svg width="24" height="23" viewBox="0 0 24 23" fill="none" stroke="#808080" aria-hidden="true">
    {kind !== " " && kind !== "0" && <path d={kind === "L" ? "M11.500 0v12" : "M11.500 0v23"} strokeDasharray="1 1" />}
    {kind !== " " && kind !== "|" && <path d="M12 12.500h12" strokeDasharray="1 1" />}
    {box && (
      <>
        <path d="M6.500 7.500h10v10h-10z" fill="#fff" />
        <path d="M9 12.500h5" stroke="#000" />
      </>
    )}
  </svg>
);
/* joints, expandable, icon, text */
const nodes: [string, boolean, string, string][] = [
  ["0", true, "project", "NewProject"],
  [" L", true, "plc", "NewPLC1[CP2E] Offline"],
  ["  T", false, "tag", "Symbols"],
  ["  T", false, "settings", "Settings"],
  ["  T", false, "memory", "Memory"],
  ["  T", true, "programs", "Programs"],
  ["  |L", true, "program", "NewProgram1 (00)"],
  ["  | T", false, "tag", "Symbols"],
  ["  | T", false, "section", "Section1"],
  ["  | L", false, "section", "END"],
  ["  L", false, "fblocks", "Function Blocks"],
];
const TabStrip = styled.div`
  display: flex;
  height: 20px;
  margin-right: 14px;
  border-left: 2px solid ${DARK};
`;
const Tab = styled.button`
  height: 20px;
  padding: 0 2px;
  background: #fff;
  border-bottom: 1px solid #000;
  font-family: ${MENU};
  font-size: 12px;
  line-height: 18px;
`;
const TabRest = styled.div`
  flex: 1;
  border-top: 2px solid #000;
`;

/* ---------- ladder diagram ---------- */

const Frame = styled.section`
  display: flex;
  flex-direction: column;
  flex: 1;
  min-width: 0;
  margin-right: 2px;
  border: 2px solid ${DARK};
  border-bottom-width: 1px;
`;
const FrameTop = styled.div`
  display: flex;
  flex: 1;
  min-height: 0;
`;
const Sheet = styled.div`
  flex: 1;
  min-width: 0;
  overflow: hidden;
  background: #fff;
  font-family: ${ARIAL};
  font-size: 18px;
`;
const RungRow = styled.article`
  display: flex;
  min-height: 119px;
`;
const Gutter = styled.div`
  flex: none;
  width: 84px;
  margin-bottom: 1px;
  padding: 1px 7px 0 4px;
  background: ${FACE};
  border-right: 1px solid ${SHADE};
  border-bottom: 1px solid ${SHADE};
  line-height: 21px;
`;
const StepNo = styled.div`
  text-align: right;
`;
const GutterEdge = styled.div`
  flex: none;
  width: 10px;
  background: ${FACE};
  border-left: 1px solid #fff;
  border-right: 1px solid ${GREEN};
`;
const Rung = styled.div<{ $first: boolean }>`
  flex: 1;
  min-width: 0;
  padding-top: ${(p) => (p.$first ? 8 : 9)}px;
  border-top: ${(p) => (p.$first ? 0 : 1)}px solid #e4e4e4;
`;
const Heading = styled.div`
  border-left: 15px solid ${GREEN};
  background: ${YEL};
  margin-bottom: 10px;
`;
const Names = styled.div`
  padding-left: 6px;
  height: 85px;
  line-height: 22px;
  border-bottom: 1px solid #f6f6b0;
`;
const NameLine = styled.p`
  display: flex;
  gap: 16px;
  margin: 0 0 21px;
  height: 21px;
  white-space: nowrap;
`;
const Brand = styled.strong`
  font-family: Inter, sans-serif;
  font-weight: 900;
  font-size: 26px;
  line-height: 32px;
  color: #000;
`;
const Caption = styled.h2`
  margin: 0;
  padding-left: 6px;
  font-size: 18px;
  font-weight: 400;
  line-height: 23px;
`;
const Body = styled.div`
  display: flex;
  background: radial-gradient(circle at 2px 2px, #c4c4c4 1px, transparent 2px) 124px 0 / 126px 76px;
`;
const Circuit = styled.div`
  display: flex;
  flex: none;
  width: 881px;
  border-right: 1px solid ${GREEN};
`;
const Inputs = styled.div`
  flex: 1;
`;
const Line = styled.div<{ $h: number }>`
  display: flex;
  height: ${(p) => p.$h}px;
`;
const Contact = styled.div`
  width: 126px;
  line-height: 22px;
`;
const Address = styled.div`
  text-align: center;
`;
const Symbol = styled.div`
  display: grid;
  grid-template-columns: 52px 1px 20px 1px 52px;
  height: 22px;
`;
const Seg = styled.i`
  height: 1px;
  margin-top: 11px;
  background: #000;
`;
const Plate = styled.i`
  height: 22px;
  background: #000;
`;
const Tag = styled.div`
  padding-left: 5px;
  color: ${BLUE};
`;
const Wire = styled.i<{ $w?: number }>`
  flex: ${(p) => (p.$w ? "none" : 1)};
  width: ${(p) => p.$w ?? 0}px;
  height: 1px;
  margin-top: 33px;
  background: #000;
`;
const EndTick = styled.i`
  width: 1px;
  height: 14px;
  margin-top: 26px;
  background: #000;
`;
const Block = styled.div`
  width: 113px;
  margin: 23px 0 9px;
  border: 1px solid #000;
  text-align: center;
`;
const BlockName = styled.div`
  height: 54px;
  margin: 0 2px;
  border-bottom: 1px solid #000;
  line-height: 54px;
`;
const BlockOp = styled.div`
  height: 75px;
  line-height: 22px;
`;
const SetValue = styled.span`
  display: inline-block;
  min-width: 32px;
  border-top: 1px solid #000;
  line-height: 25px;
`;
const Coil = styled.div`
  width: 122px;
  line-height: 22px;
`;
const CoilSymbol = styled.div`
  display: grid;
  grid-template-columns: 1fr 24px 1fr;
  height: 22px;
`;
const Notes = styled.div`
  padding: 39px 0 0 18px;
  line-height: 22px;
`;
const CoilNotes = styled(Notes)`
  padding-top: 22px;
`;
const Note = styled.div<{ $blue?: boolean; $gap?: number }>`
  margin-top: ${(p) => p.$gap ?? 0}px;
  color: ${(p) => (p.$blue ? BLUE : "inherit")};
`;

const ContactLine = ({ h, address, tag, children }: { h: number; address: string; tag: string; children?: React.ReactNode }) => (
  <Line $h={h}>
    <Contact>
      <Address>{address}</Address>
      <Symbol>
        <Seg />
        <Plate />
        <span />
        <Plate />
        <Seg />
      </Symbol>
      <Tag>{tag}</Tag>
    </Contact>
    <Wire />
    {children}
  </Line>
);

type CounterSpec = { inputs: [string, string][]; name: string; num: string; set: string; kind: string; tag: string };
const CounterBody = ({ inputs, name, num, set, kind, tag }: CounterSpec) => (
  <Body>
    <Circuit>
      <Inputs>
        {inputs.map(([a, t], i) => (
          <ContactLine key={a} h={i ? 153 : 77} address={a} tag={t} />
        ))}
      </Inputs>
      <Block>
        <BlockName>{name}</BlockName>
        <BlockOp>{num}</BlockOp>
        <SetValue>{set}</SetValue>
      </Block>
      <Wire $w={4} />
      <EndTick />
    </Circuit>
    <Notes>
      <Note>{kind}</Note>
      <Note $blue $gap={16}>{tag}</Note>
      <Note>Counter number</Note>
      <Note $gap={34}>Set value</Note>
    </Notes>
  </Body>
);

const RungView = ({ no, step, title, names, children }: any) => (
  <RungRow>
    <Gutter>
      {no}
      <StepNo>{step}</StepNo>
    </Gutter>
    <GutterEdge />
    <Rung $first={no === 0}>
      <Heading>
        {names}
        <Caption>{title}</Caption>
      </Heading>
      {children}
    </Rung>
  </RungRow>
);

/* ---------- scroll bars ---------- */

const raised = css`
  background: ${FACE};
  border: 1px solid;
  border-color: #fff ${DARK} ${DARK} #fff;
  box-shadow: inset -1px -1px 0 ${SHADE};
`;
const VScroll = styled.div`
  display: flex;
  flex-direction: column;
  width: 20px;
  background: #f7f7f7;
`;
const HScroll = styled.div`
  display: flex;
  height: 21px;
  padding-right: 20px;
  background: #f7f7f7;
  box-shadow: inset -20px 0 0 ${FACE};
`;
const Split = styled.div<{ $v?: boolean }>`
  ${raised}
  width: ${(p) => (p.$v ? "20px" : "8px")};
  height: ${(p) => (p.$v ? "8px" : "21px")};
`;
const Arrow = styled.button`
  ${raised}
  flex: none;
  width: 20px;
  height: 21px;
`;
const Track = styled.div<{ $v?: boolean }>`
  flex: 1;
  display: flex;
  flex-direction: ${(p) => (p.$v ? "column" : "row")};
`;
const Thumb = styled.div<{ $size: string; $v?: boolean }>`
  ${raised}
  ${(p) => (p.$v ? "height" : "width")}: ${(p) => p.$size};
`;
const ArrowSvg = ({ d }: { d: string }) => (
  <svg width="10" height="10" viewBox="0 0 10 10" aria-hidden="true">
    <path d={d} fill="#000" />
  </svg>
);

/* ---------- status bar ---------- */

const Status = styled.footer`
  display: flex;
  gap: 3px;
  height: 22px;
  padding-top: 3px;
  border-top: 1px solid #fff;
  overflow: hidden;
  font-size: 14px;
  line-height: 22px;
  white-space: pre;
`;
const StatusText = styled.div`
  flex: 1;
  padding-left: 3px;
`;
const StatusCell = styled.div<{ $w: number }>`
  width: ${(p) => p.$w}px;
  height: 24px;
  padding-left: 2px;
  border-top: 1px solid ${SHADE};
  border-left: 1px solid ${SHADE};
`;
const cells: [number, string][] = [
  [25, ""], [82, ""], [320, "NewPLC1(Net:0,Node:0) - Offline"], [70, ""], [69, ""],
  [163, "rung 8 (4, 0)  - 150%"], [132, ""], [76, "Classic"], [36, "CAP"], [42, ""],
];

export default function App() {
  return (
    <Shell>
      <Global />
      <TitleBar>
        <Icon name="app" />
        <Title>COUNTER - CX-Programmer - [NewPLC1.NewProgram1.Section1 [Diagram]]</Title>
        <CaptionButton aria-label="Minimize">
          <svg width="14" height="14" viewBox="0 0 14 14" stroke="#8c8c8c" fill="none"><path d="M1 6.500h12" /></svg>
        </CaptionButton>
        <CaptionButton aria-label="Restore">
          <svg width="14" height="14" viewBox="0 0 14 14" stroke="#8c8c8c" fill="none"><path d="M1.500 3.500h9v9h-9zM3.500 3.500v-2h9v9h-2" /></svg>
        </CaptionButton>
        <CaptionButton aria-label="Close">
          <svg width="14" height="14" viewBox="0 0 14 14" stroke="#8c8c8c" fill="none"><path d="m1 1 12 12M13 1 1 13" /></svg>
        </CaptionButton>
      </TitleBar>
      <MenuBar>
        <Icon name="ladderDoc" />
        <MenuList>
          {["File", "Edit", "View", "Insert", "PLC", "Program", "Simulation", "Tools", "Window", "Help"].map((m) => (
            <li key={m}>
              <MenuItem>{m}</MenuItem>
            </li>
          ))}
        </MenuList>
        <MdiButtons>
          <MdiButton aria-label="Minimize document">
            <svg width="12" height="12" viewBox="0 0 12 12" stroke="currentColor"><path d="M2 9h8" strokeWidth="2" /></svg>
          </MdiButton>
          <MdiButton aria-label="Restore document">
            <svg width="12" height="12" viewBox="0 0 12 12" stroke="currentColor" fill="none" strokeWidth="1.500"><path d="M1.500 5.500h6v5h-6zM1 6h7M4 4V2h7v5H9M4 2h7" /></svg>
          </MdiButton>
          <MdiButton aria-label="Close document">
            <svg width="12" height="12" viewBox="0 0 12 12" stroke="currentColor"><path d="m2 2 8 8M10 2l-8 8" strokeWidth="3" /></svg>
          </MdiButton>
        </MdiButtons>
      </MenuBar>
      <Dock>
        {docks.map((row, i) => (
          <DockRow key={i}>
            {row.map((b) => (
              <ToolBar key={b.label} {...b} />
            ))}
          </DockRow>
        ))}
      </Dock>
      <Work>
        <Side>
          <SideHead>
            <SideGrip />
            <SmallButton aria-label="Pane menu">
              <svg width="8" height="8" viewBox="0 0 8 8"><path d="M1 2h6L4 5z" fill="#999" /></svg>
            </SmallButton>
            <SmallButton aria-label="Close pane">
              <svg width="9" height="9" viewBox="0 0 9 9" stroke="#000"><path d="m1 1 7 7M8 1 1 8" strokeWidth="2" /></svg>
            </SmallButton>
          </SideHead>
          <TreeBox>
            {nodes.map(([joints, box, icon, text], i) => (
              <TreeRow key={i}>
                {joints.split("").map((k, j) => (
                  <Joint key={j} kind={k} box={box && j === joints.length - 1} />
                ))}
                <Icon name={icon} />
                <TreeLabel $sel={text === "Section1"}>{text}</TreeLabel>
              </TreeRow>
            ))}
          </TreeBox>
          <TabStrip>
            <svg width="11" height="20" viewBox="0 0 11 20" aria-hidden="true">
              <path d="M0 0 7 19.500H11V0z" fill="#fff" />
              <path d="M0 0 7 19.500H11" stroke="#000" fill="none" />
            </svg>
            <Tab>Project</Tab>
            <svg width="11" height="20" viewBox="0 0 11 20" aria-hidden="true">
              <path d="M0 0H9L3 19.500H0z" fill="#fff" />
              <path d="M11 1H9L3 19.500H0" stroke="#000" strokeWidth="1.500" fill="none" />
            </svg>
            <TabRest />
          </TabStrip>
        </Side>
        <Frame>
          <FrameTop>
            <Sheet>
              <RungView
                no={0}
                step={0}
                title="COUNTER BCD"
                names={
                  <Names>
                    <NameLine>
                      <span>[Program Name : NewProgram1]</span>
                      <Brand>InstrumentationTools.com</Brand>
                    </NameLine>
                    <NameLine>[Section Name : Section1]</NameLine>
                  </Names>
                }
              >
                <CounterBody
                  inputs={[["I: 0.00", "TRIG_CNT_..."], ["I: 0.01", "RES_CNT_..."]]}
                  name="CNT"
                  num="000"
                  set="#5"
                  kind="Counter"
                  tag="COUNTER_BCD"
                />
              </RungView>
              <RungView no={1} step={3} title="OUT BCD">
                <Body>
                  <Circuit>
                    <Inputs>
                      <ContactLine h={76} address="C000" tag="COUNTER...">
                        <Coil>
                          <Address>Q: 100.00</Address>
                          <CoilSymbol>
                            <Seg />
                            <svg width="24" height="22" viewBox="0 0 24 22" fill="#fff" stroke="#000" aria-hidden="true">
                              <ellipse cx="12" cy="11.500" rx="11.500" ry="10" />
                            </svg>
                            <Seg />
                          </CoilSymbol>
                        </Coil>
                        <EndTick />
                      </ContactLine>
                    </Inputs>
                  </Circuit>
                  <CoilNotes>
                    <Note $blue>OUT1</Note>
                  </CoilNotes>
                </Body>
              </RungView>
              <RungView no={2} step={5} title="COUNTER BIN">
                <CounterBody
                  inputs={[["I: 0.02", "TRIG_CNT_..."], ["I: 0.03", "RES_CNT_..."]]}
                  name="CNTX(546)"
                  num="001"
                  set="&6"
                  kind="Counter (BIN Type)"
                  tag="COUNTER_BIN"
                />
              </RungView>
              <RungView no={3} step={8} title="OUT BIN" />
            </Sheet>
            <VScroll>
              <Split $v />
              <Arrow aria-label="Scroll up">
                <ArrowSvg d="M0 8 5 3l5 5z" />
              </Arrow>
              <Track $v>
                <Thumb $v $size="29%" />
              </Track>
              <Arrow aria-label="Scroll down">
                <ArrowSvg d="M0 3h10L5 8z" />
              </Arrow>
            </VScroll>
          </FrameTop>
          <HScroll>
            <Split />
            <Arrow aria-label="Scroll left">
              <ArrowSvg d="M7 0v10L2 5z" />
            </Arrow>
            <Track>
              <Thumb $size="63%" />
            </Track>
            <Arrow aria-label="Scroll right">
              <ArrowSvg d="M3 0v10l5-5z" />
            </Arrow>
          </HScroll>
        </Frame>
      </Work>
      <Status>
        <StatusText>For Help, press F1</StatusText>
        {cells.map(([w, t], i) => (
          <StatusCell key={i} $w={w}>
            {t}
          </StatusCell>
        ))}
      </Status>
    </Shell>
  );
}
